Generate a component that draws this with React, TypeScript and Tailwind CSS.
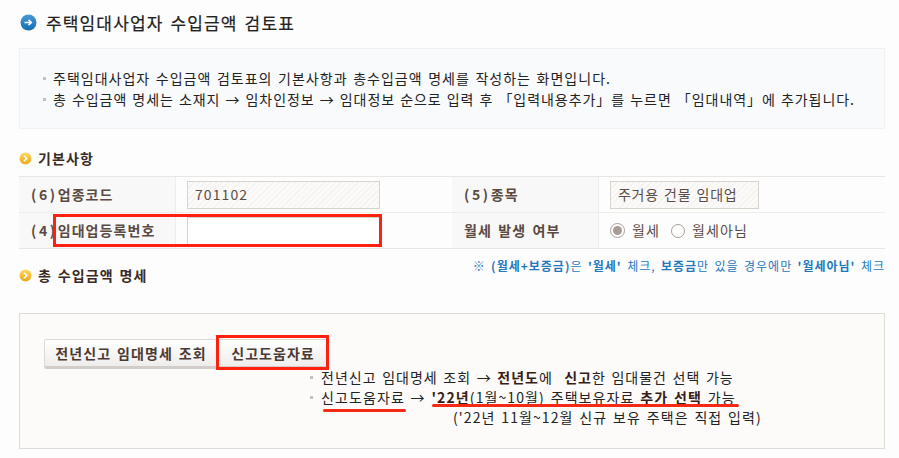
const font = { fontFamily: '"Noto Sans CJK KR", sans-serif' };

function BlueIcon() {
  return (
    <svg width="17" height="17" viewBox="0 0 17 17" className="shrink-0">
      <defs>
        <linearGradient id="bl" x1="0" y1="0" x2="0" y2="1">
          <stop offset="0" stopColor="#4a9ad4" />
          <stop offset="1" stopColor="#0f6fb4" />
        </linearGradient>
      </defs>
      <circle cx="8.5" cy="8.5" r="8" fill="url(#bl)" />
      <path d="M4.5 8.5H11M8.5 5.8L11.3 8.5L8.5 11.2" fill="none" stroke="#fff" strokeWidth="1.6" />
    </svg>
  );
}

function YellowIcon() {
  return (
    <svg width="13" height="13" viewBox="0 0 13 13" className="shrink-0">
      <defs>
        <linearGradient id="yl" x1="0" y1="0" x2="0" y2="1">
          <stop offset="0" stopColor="#fbd864" />
          <stop offset="1" stopColor="#eda915" />
        </linearGradient>
      </defs>
      <circle cx="6.5" cy="6.5" r="6" fill="url(#yl)" />
      <path d="M5 3.8L7.8 6.5L5 9.2" fill="none" stroke="#fff" strokeWidth="1.5" />
    </svg>
  );
}

function Bullet() {
  return <span className="w-[3px] h-[3px] bg-[#c4c0ba] shrink-0" />;
}

function Th({ children, last }: { children: React.ReactNode; last?: boolean }) {
  return (
    <div className={`bg-[#f8f8f8] flex items-center pl-[12px] text-[14px] font-bold text-[#5b4a42] tracking-[1.1px] [word-spacing:2px] border-r border-[#efedea] ${last ? "h-[35px]" : "h-[36px] border-b border-[#efedea]"}`}>
      {children}
    </div>
  );
}

function Td({ children, last }: { children: React.ReactNode; last?: boolean }) {
  return (
    <div className={`flex items-center pl-[11px] ${last ? "h-[35px]" : "h-[36px] border-b border-[#efedea]"}`}>
      {children}
    </div>
  );
}

function Paren({ children }: { children: React.ReactNode }) {
  return <span className="tracking-[2.6px]">{children}</span>;
}

const hatch =
  "bg-[repeating-linear-gradient(135deg,#f4f2f0_0px,#f4f2f0_1px,#fbfaf9_1px,#fbfaf9_4px)] border border-[#d9d3ce] h-[28px] flex items-center text-[14px] text-[#5a4c44]";

const line = "tracking-[1px] [word-spacing:1.5px] whitespace-pre";

export default function App() {
  return (
    <div style={font} className="w-[899px] h-[458px] overflow-hidden bg-[#fdfdfd] pl-[19px] pr-[14px] text-[#333] relative">
      <div className="h-[48px] flex items-center gap-[9px] pb-[4px] pl-[1px]">
        <BlueIcon />
        <h1 className="text-[17px] font-normal text-[#222] tracking-[1.15px] [word-spacing:2px] leading-none [-webkit-text-stroke:0.2px_#222]">주택임대사업자 수입금액 검토표</h1>
      </div>

      <div className="h-[81px] bg-[#f9fafc] border border-[#f0f1f3] pl-[23px] flex flex-col justify-center gap-[2px] text-[14px] leading-[19px] text-[#222]">
        <div className="flex items-center gap-[7px]"><Bullet /><span className={line}>주택임대사업자 수입금액 검토표의 기본사항과 총수입금액 명세를 작성하는 화면입니다.</span></div>
        <div className="flex items-center gap-[7px]"><Bullet /><span className="tracking-[0.95px] [word-spacing:1px] whitespace-pre">총 수입금액 명세는 소재지 → 임차인정보 → 임대정보 순으로 입력 후 「입력내용추가」를 누르면 「임대내역」에 추가됩니다.</span></div>
      </div>

      <div className="h-[47px] flex items-center gap-[6px] pt-[11px]">
        <YellowIcon />
        <h2 className="text-[14px] font-bold text-[#3a2a25] tracking-[1.1px]">기본사항</h2>
      </div>

      <div className="grid grid-cols-[157px_276px_147px_1fr] border-t border-b border-[#e8e5e2]">
        <Th><Paren>(6)</Paren>업종코드</Th>
        <Td><div className={`${hatch} w-[193px] pl-[7px] tracking-[1.1px]`}>701102</div></Td>
        <Th><Paren>(5)</Paren>종목</Th>
        <Td><div className={`${hatch} w-[149px] pl-[7px] tracking-[0.7px] [word-spacing:1.5px]`}>주거용 건물 임대업</div></Td>
        <Th last><Paren>(4)</Paren>임대업등록번호</Th>
        <Td last><div className="w-[193px] h-[28px] border border-[#d9d3ce] bg-white" /></Td>
        <Th last>월세 발생 여부</Th>
        <Td last>
          <div className="flex items-center text-[14px] text-[#5a4c44] tracking-[1.1px]">
            <span className="w-[15px] h-[15px] rounded-full border border-[#a89f98] bg-white flex items-center justify-center mr-[7px]"><span className="w-[9px] h-[9px] rounded-full bg-[#a89c94]" /></span>
            <span className="mr-[11px]">월세</span>
            <span className="w-[14px] h-[14px] rounded-full border border-[#a89f98] bg-white mr-[7px]" />
            <span>월세아님</span>
          </div>
        </Td>
      </div>

      <div className="flex justify-between items-start h-[64px]">
        <div className="flex items-center gap-[6px] pt-[16px]">
          <YellowIcon />
          <h2 className="text-[14px] font-bold text-[#3a2a25] tracking-[1.1px] [word-spacing:1.5px]">총 수입금액 명세</h2>
        </div>
        <p className="text-[12px] text-[#2378bd] pt-[8px] tracking-[1px] [word-spacing:1.7px] whitespace-pre">
          ※ <b>(월세+보증금)</b>은 <b>'월세'</b> 체크, <b>보증금</b>만 있을 경우에만 <b>'월세아님'</b> 체크
        </p>
      </div>

      <div className="h-[136px] bg-[#fcfbfa] border border-[#dfdbd7] pt-[25px] pl-[24px]">
        <div className="flex">
          <button className="h-[30px] w-[174px] rounded-l-[2px] border border-[#dcd8d4] border-b-[3px] border-b-[#d3cdc9] bg-gradient-to-b from-white to-[#efedeb] text-[14px] font-bold text-[#4a3a34] tracking-[1.1px] [word-spacing:1.5px] flex items-center justify-center">전년신고 임대명세 조회</button>
          <button className="h-[30px] w-[110px] border border-[#dcd8d4] border-b-[3px] border-b-[#d3cdc9] bg-gradient-to-b from-white to-[#efedeb] text-[14px] font-bold text-[#4a3a34] tracking-[1.05px] flex items-center justify-center">신고도움자료</button>
        </div>
        <div className="ml-[266px] -mt-[2px] text-[14px] leading-[20px] text-[#222]">
          <div className="flex items-center gap-[8px]"><Bullet /><span className="tracking-[1px] [word-spacing:1.5px] whitespace-pre">전년신고 임대명세 조회 → <b className="text-[#3a1c14]">전년도</b>에  <b className="text-[#3a1c14]">신고</b>한 임대물건 선택 가능</span></div>
          <div className="flex items-center gap-[8px]"><Bullet /><span className="tracking-[1.1px] [word-spacing:1.5px] whitespace-pre">신고도움자료 → <b className="text-[#3a1c14]">'22년</b>(1월~10월) 주택보유자료 <b className="text-[#3a1c14]">추가 선택</b> 가능</span></div>
          <div className={`pl-[143px] tracking-[1.1px] [word-spacing:1.5px] whitespace-pre`}>('22년 11월~12월 신규 보유 주택은 직접 입력)</div>
        </div>
      </div>

      <div className="absolute left-[53px] top-[214px] w-[329px] h-[33px] border-[3px] border-[#ff2010]" />
      <div className="absolute left-[216px] top-[335px] w-[113px] h-[35px] border-[3px] border-[#ff2010]" />
      <div className="absolute left-[323px] top-[409px] w-[83px] h-[3px] rounded-full bg-[#f52a14]" />
      <div className="absolute left-[432px] top-[404px] w-[307px] h-[3px] rounded-full bg-[#f52a14]" />
    </div>
  );
}
